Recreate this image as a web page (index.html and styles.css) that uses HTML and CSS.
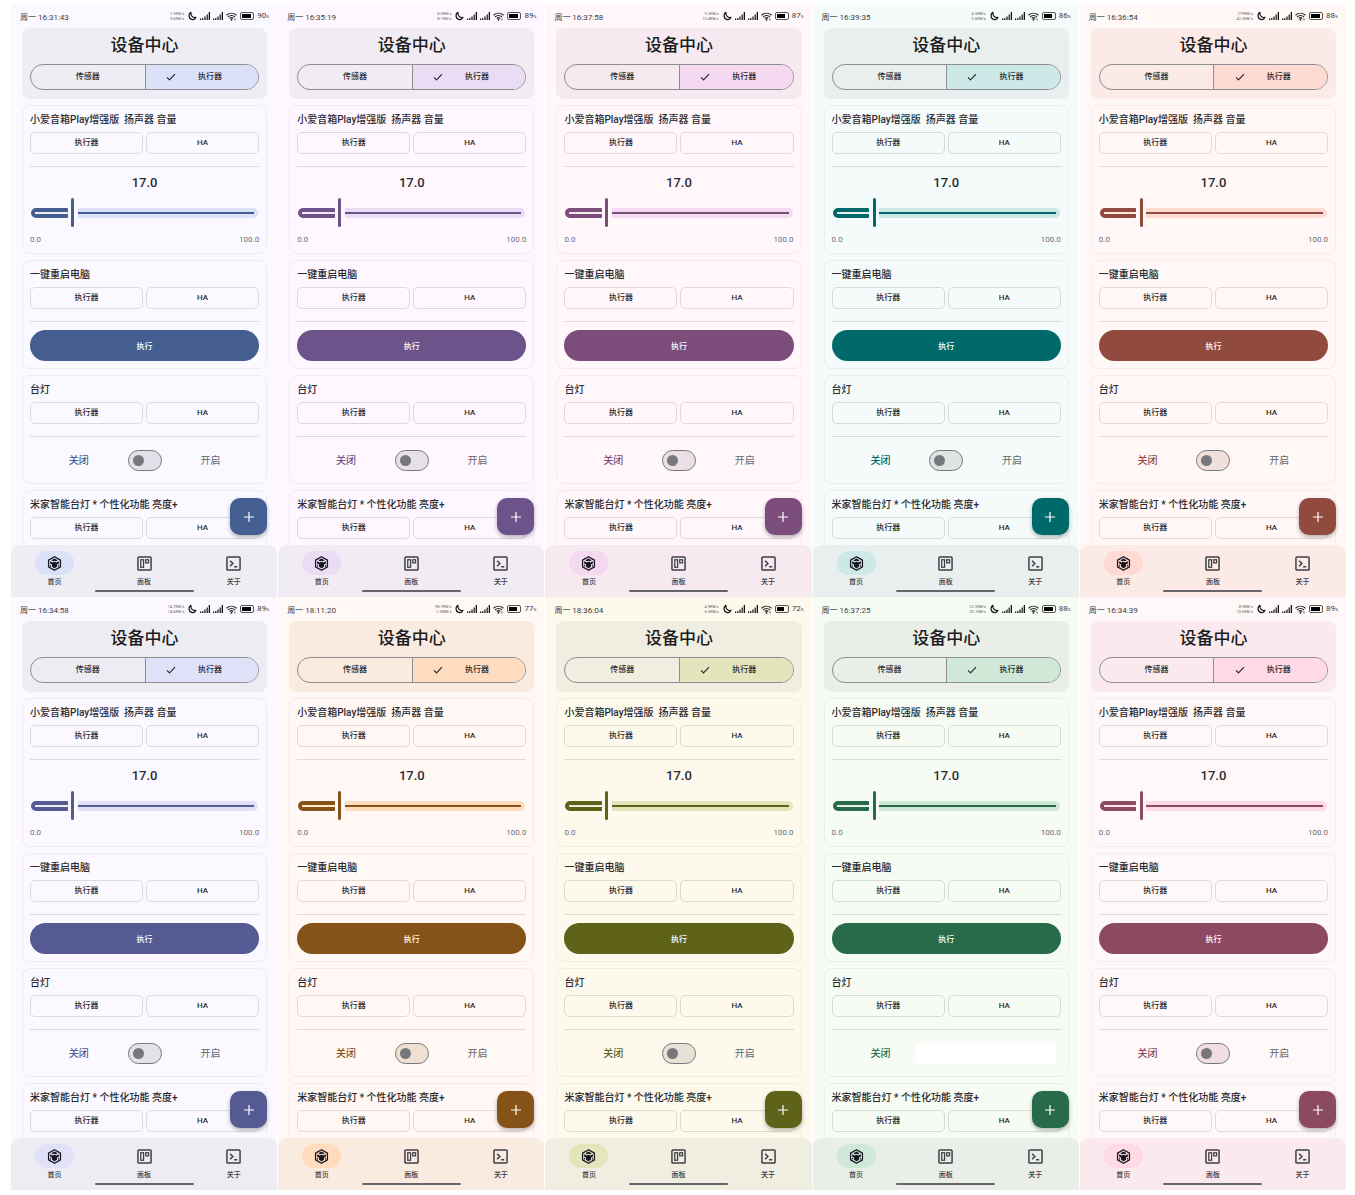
FILE: index.html
```html
<!DOCTYPE html>
<html lang="zh-CN">
<head>
<meta charset="utf-8">
<meta name="viewport" content="width=device-width, initial-scale=1">
<title>设备中心</title>
<link rel="stylesheet" href="styles.css">
</head>
<body>
<svg class="sprite" aria-hidden="true">
  <symbol id="i-moon" viewBox="0 0 18 18"><path d="M7 2.500C2 5.500 2.500 13 8.500 15c3.500 1 6.500-.7 7.500-3.500-5.500 1.300-9.500-3-9-9z" fill="none" stroke="#111" stroke-width="2.200" stroke-linejoin="round"/></symbol>
  <symbol id="i-signal" viewBox="0 0 10 8"><path d="M0 6.500h1.200V8H0zM2.200 6h1.200v2H2.200zM4.400 4.500h1.200V8H4.400zM6.600 2.500h1.200V8H6.600zM8.700 0H10v8H8.700z" fill="#111"/></symbol>
  <symbol id="i-wifi" viewBox="0 0 22 18"><path d="M1 6.500c6-5.500 14-5.500 20 0M4 10c4-4 10-4 14 0M7.500 13c2-2 5-2 7 0" fill="none" stroke="#222" stroke-width="2.200"/><circle cx="11" cy="15.500" r="1.800" fill="#222"/><path d="M18 13v4" stroke="#222" stroke-width="1.500"/></symbol>
  <symbol id="i-check" viewBox="0 0 10 8"><path d="M1 4.300l2.500 2.500L9 1.200" fill="none" stroke="currentColor" stroke-width="1.200"/></symbol>
  <symbol id="i-plus" viewBox="0 0 10 10"><path d="M5 0v10M0 5h10" stroke="currentColor" stroke-width="1.200"/></symbol>
  <symbol id="i-home" viewBox="0 0 24 24"><path d="M12 1.200l9.500 5.400v10.800L12 22.800l-9.500-5.400V6.600z" fill="none" stroke="currentColor" stroke-width="2" stroke-linejoin="round"/><path d="M12 4l5 2.700-2.800 1.700L12 7.500l-2.200.9L7 6.700zM5 8.300l4 2 3-1.100 3 1.100 4-2v3.500l-3 1.600v3.300L12 20l-4-3.300v-3.300l-3-1.600zM4.800 14l1.700.9v2.300l-1.700-1zM19.200 14l-1.700.9v2.300l1.700-1z" fill="currentColor"/></symbol>
  <symbol id="i-board" viewBox="0 0 24 24"><g fill="none" stroke="currentColor"><rect x="1.500" y="1.500" width="21" height="21" rx="1.500" stroke-width="2.400"/><rect x="6" y="6" width="4.500" height="12" stroke-width="2"/><rect x="14" y="6" width="4.500" height="5" stroke-width="2"/></g></symbol>
  <symbol id="i-term" viewBox="0 0 24 24"><g fill="none" stroke="currentColor" stroke-width="2.400"><rect x="1.500" y="1.500" width="21" height="21" rx="1.500"/><path d="M6.500 7.500l4.500 4.500-4.500 4.500M13 17h5"/></g></symbol>
</svg>
<main class="board" id="board"></main>
<script src="script.js"></script>
</body>
</html>
```
FILE: styles.css
```css
* { box-sizing: border-box; }
body {
  margin: 0;
  background: #fff;
  font-family: Roboto, "Noto Sans CJK SC", sans-serif;
  font-size: 8px;
  font-weight: 500;
  color: #2a2b30;
}
button { font: inherit; color: inherit; padding: 0; margin: 0; }
a { color: inherit; text-decoration: none; }
.sprite { position: absolute; width: 0; height: 0; }

.board {
  display: grid;
  grid-template-columns: repeat(5, minmax(0, 1fr));
  grid-template-rows: repeat(2, minmax(0, 1fr));
  column-gap: 1px;
  height: 100vh;
  min-height: 900px;
  padding: 4px 9px 5px 11px;
}

.phone {
  display: flex;
  flex-direction: column;
  min-height: 0;
  background: var(--surface);
}

.t-blue { --primary: #445e91; --tint: #dae1f9; --surface: #faf9ff; --bar: #ededf3; --line: #dbdce3; --off: #e1e2e9; }
.t-purple { --primary: #6c5389; --tint: #ebdcf6; --surface: #fef7ff; --bar: #f1ebf3; --line: #ded7e0; --off: #e7e0e8; }
.t-pink { --primary: #7c4d7b; --tint: #f5d9f0; --surface: #fff7fa; --bar: #f6e9f0; --line: #e6d7df; --off: #ebdfe6; }
.t-teal { --primary: #006a6a; --tint: #cce8e7; --surface: #f4fbfa; --bar: #e8efee; --line: #d2dcdc; --off: #dde4e3; }
.t-red { --primary: #904b3e; --tint: #ffdad3; --surface: #fff8f6; --bar: #fceae6; --line: #ebd8d4; --off: #f1dfda; }
.t-indigo { --primary: #555a92; --tint: #e0e0f9; --surface: #fbf8ff; --bar: #eeecf3; --line: #dcdae3; --off: #e4e1e9; }
.t-orange { --primary: #855318; --tint: #ffdcbe; --surface: #fff8f5; --bar: #f9ebdf; --line: #e8d8cd; --off: #f0e0d2; }
.t-olive { --primary: #5f6219; --tint: #e4e4bd; --surface: #fdf9ec; --bar: #f0eee0; --line: #dcdbcb; --off: #e5e3d5; }
.t-green { --primary: #286b4a; --tint: #d0e8d8; --surface: #f6fbf4; --bar: #e9efe8; --line: #d5dcd5; --off: #dfe4dd; }
.t-rose { --primary: #8b4a62; --tint: #ffd9e3; --surface: #fff8f8; --bar: #faeaed; --line: #e8d7db; --off: #f0dee2; }

.status {
  display: flex;
  align-items: center;
  justify-content: space-between;
  height: 24px;
  padding: 0 8px 0 9px;
  flex: none;
  color: #3c3c40;
  font-weight: 400;
}
.status-icons { display: flex; align-items: center; gap: 3px; }
.speed { font-size: 4px; line-height: 5px; text-align: right; color: #666; }
.moon { width: 10px; height: 10px; }
.signal { width: 10px; height: 8px; }
.wifi { width: 11px; height: 9px; }
.battery {
  width: 14px;
  height: 8px;
  padding: 1px;
  border: 1px solid #555;
  border-radius: 2px;
}
.battery-level { display: block; height: 100%; background: #000; }
.percent { font-size: 8px; line-height: 10px; }
.percent small { font-size: 4px; }

.screen {
  position: relative;
  flex: 1;
  min-height: 0;
  overflow: hidden;
}
.list { display: flex; flex-direction: column; gap: 6px; padding: 0 10px 0 11px; }

.head {
  height: 71px;
  padding: 6px 8px 0;
  border-radius: 8px;
  background: var(--bar);
}
.head h1 {
  margin: 0 0 8px;
  font-size: 17px;
  line-height: 22px;
  font-weight: 500;
  text-align: center;
  color: #1b1b20;
}
.segments {
  display: grid;
  grid-template-columns: 1fr 1fr;
  height: 26px;
  border: 1px solid #8d8d92;
  border-radius: 13px;
  overflow: hidden;
}
.segment { border: 0; background: none; line-height: 12px; }
.segment.selected {
  display: flex;
  align-items: center;
  justify-content: center;
  gap: 22px;
  padding-right: 16px;
  border-left: 1px solid #8d8d92;
  background: var(--tint);
}
.check { width: 10px; height: 8px; }

.card {
  padding: 7px;
  border: 1px solid var(--bar);
  border-radius: 8px;
}
.card h2 {
  margin: 0 0 5px;
  font-size: 10px;
  line-height: 14px;
  font-weight: 500;
  white-space: pre;
}
.chips {
  display: grid;
  grid-template-columns: 1fr 1fr;
  gap: 3px;
  padding-bottom: 12px;
  margin-bottom: 8px;
  border-bottom: 1px solid var(--line);
}
.chip {
  height: 22px;
  border: 1px solid var(--line);
  border-radius: 5px;
  background: none;
  line-height: 12px;
}

.value {
  display: block;
  font-size: 13px;
  line-height: 16px;
  text-align: center;
}
.slider {
  position: relative;
  display: flex;
  align-items: center;
  gap: 10px;
  height: 29px;
  margin: 7px 1px;
}
.track { display: flex; align-items: center; height: 10px; }
.track::before { content: ""; flex: 1; height: 2px; }
.track-on { padding-left: 4px; border-radius: 5px 1px 1px 5px; background: var(--primary); }
.track-on::before { background: repeating-linear-gradient(90deg, var(--tint) 0 1px, var(--surface) 1px 2px); }
.track-off { flex: 1; padding-right: 4px; border-radius: 1px 5px 5px 1px; background: var(--tint); }
.track-off::before { background: var(--primary); }
.slider input {
  position: absolute;
  inset: 0;
  width: 100%;
  height: 100%;
  margin: 0;
  padding: 0 3px;
  appearance: none;
  background: none;
}
.slider input::-webkit-slider-thumb {
  appearance: none;
  width: 3px;
  height: 29px;
  border-radius: 2px;
  background: var(--primary);
}
.scale {
  display: flex;
  justify-content: space-between;
  line-height: 12px;
  font-weight: 400;
  color: #6c6d72;
}

.run {
  display: block;
  width: 100%;
  height: 31px;
  border: 0;
  border-radius: 16px;
  background: var(--primary);
  color: #fff;
}

.toggle {
  position: relative;
  display: flex;
  align-items: center;
  justify-content: space-evenly;
  height: 31px;
  font-size: 10px;
  line-height: 14px;
  font-weight: 400;
  color: #66676c;
}
.toggle .off { color: var(--primary); font-weight: 500; }
.toggle input {
  display: flex;
  align-items: center;
  width: 34px;
  height: 21px;
  margin: 0;
  padding-left: 4px;
  appearance: none;
  border: 1px solid #77777c;
  border-radius: 11px;
  background: var(--off);
}
.toggle input::before {
  content: "";
  width: 11px;
  height: 11px;
  border-radius: 50%;
  background: #77777c;
}
.cover {
  position: absolute;
  right: 5px;
  top: 5px;
  width: 61%;
  height: 21px;
  border-radius: 4px;
  background: #fff;
}

.fab {
  position: absolute;
  right: 10px;
  bottom: 10px;
  display: grid;
  place-items: center;
  width: 37px;
  height: 37px;
  border: 0;
  border-radius: 10px;
  background: var(--primary);
  color: #fff;
  box-shadow: 0 2px 4px rgba(0, 0, 0, 0.3);
}
.fab svg { width: 10px; height: 10px; }

.nav {
  flex: none;
  padding: 6px 24px 5px;
  border-radius: 9px 9px 0 0;
  background: var(--bar);
  color: #3f4046;
}
.tabs { display: flex; justify-content: space-between; }
.tab {
  display: flex;
  flex-direction: column;
  align-items: center;
  width: 39px;
  font-size: 7px;
  line-height: 12px;
}
.tab-icon {
  display: grid;
  place-items: center;
  width: 39px;
  height: 24px;
  margin-bottom: 1px;
  border-radius: 12px;
}
.tab-icon svg { width: 15px; height: 15px; }
.tab.current .tab-icon { background: var(--tint); color: #15151f; }
.gesture {
  width: 99px;
  height: 2px;
  margin: 2px auto 0;
  border-radius: 1px;
  background: #66666a;
}
```
FILE: script.js
```js
const phones = [
  { theme: "blue", time: "16:31:43", up: "7.3KB/s", down: "9.6KB/s", battery: 90 },
  { theme: "purple", time: "16:35:19", up: "8.0KB/s", down: "8.1KB/s", battery: 89 },
  { theme: "pink", time: "16:37:58", up: "9.2KB/s", down: "10.4KB/s", battery: 87 },
  { theme: "teal", time: "16:39:35", up: "4.5KB/s", down: "5.6KB/s", battery: 86 },
  { theme: "red", time: "16:36:54", up: "279KB/s", down: "42.5KB/s", battery: 88 },
  { theme: "indigo", time: "16:34:58", up: "14.7KB/s", down: "14.6KB/s", battery: 89 },
  { theme: "orange", time: "18:11:20", up: "98.7KB/s", down: "2.3MB/s", battery: 77 },
  { theme: "olive", time: "18:36:04", up: "4.9KB/s", down: "6.0KB/s", battery: 72 },
  { theme: "green", time: "16:37:25", up: "22.5KB/s", down: "20.1KB/s", battery: 88, covered: true },
  { theme: "rose", time: "16:34:39", up: "8.9KB/s", down: "10.6KB/s", battery: 89 }
];

const icon = (name, cls = "") => `<svg class="${cls}" aria-hidden="true"><use href="#i-${name}"/></svg>`;

const card = (title, body = "") => `
  <section class="card">
    <h2>${title}</h2>
    <div class="chips"><button class="chip">执行器</button><button class="chip">HA</button></div>
    ${body}
  </section>`;

const tab = (name, label, current) => `
  <a class="tab${current ? " current" : ""}" href="#${name}"><span class="tab-icon">${icon(name)}</span>${label}</a>`;

const slider = (id, value) => `
  <label class="value" for="${id}">${value.toFixed(1)}</label>
  <div class="slider">
    <span class="track track-on" style="width: calc(${value}% - 2px)"></span>
    <span class="track track-off"></span>
    <input type="range" id="${id}" min="0" max="100" value="${value}">
  </div>
  <div class="scale"><span>0.0</span><span>100.0</span></div>`;

const toggle = (id, covered) => `
  <div class="toggle">
    <span class="off">关闭</span>
    <input type="checkbox" role="switch" id="${id}">
    <label for="${id}">开启</label>
    ${covered ? '<span class="cover"></span>' : ""}
  </div>`;

const phone = (p, i) => `
  <article class="phone t-${p.theme}">
    <div class="status">
      <span>周一 ${p.time}</span>
      <div class="status-icons">
        <span class="speed">${p.up}<br>${p.down}</span>
        ${icon("moon", "moon")}${icon("signal", "signal")}${icon("signal", "signal")}${icon("wifi", "wifi")}
        <span class="battery"><span class="battery-level" style="width: ${p.battery}%"></span></span>
        <span class="percent">${p.battery}<small>%</small></span>
      </div>
    </div>
    <div class="screen">
      <div class="list">
        <header class="head">
          <h1>设备中心</h1>
          <div class="segments">
            <button class="segment">传感器</button>
            <button class="segment selected" aria-pressed="true">${icon("check", "check")}执行器</button>
          </div>
        </header>
        ${card("小爱音箱Play增强版  扬声器 音量", slider("volume-" + i, 17))}
        ${card("一键重启电脑", '<button class="run">执行</button>')}
        ${card("台灯", toggle("lamp-" + i, p.covered))}
        ${card("米家智能台灯 * 个性化功能 亮度+")}
      </div>
      <button class="fab" aria-label="添加">${icon("plus")}</button>
    </div>
    <nav class="nav">
      <div class="tabs">${tab("home", "首页", true)}${tab("board", "面板")}${tab("term", "关于")}</div>
      <div class="gesture"></div>
    </nav>
  </article>`;

document.getElementById("board").innerHTML = phones.map(phone).join("");
```
